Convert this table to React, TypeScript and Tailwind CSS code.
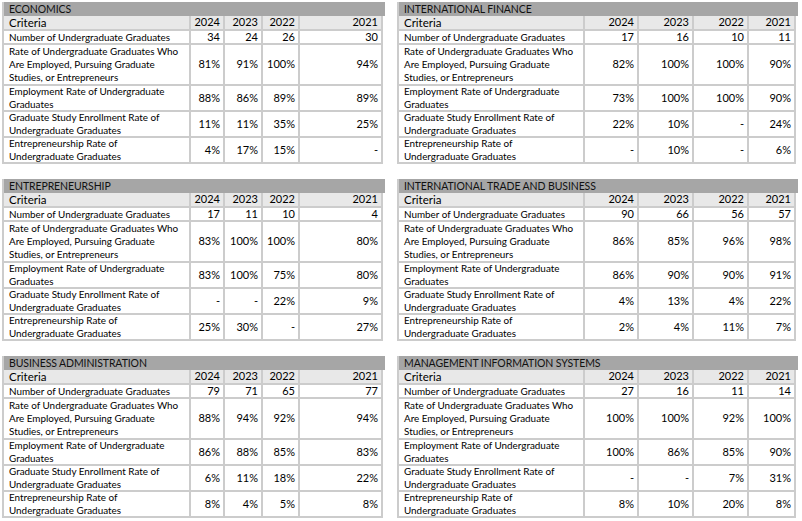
import React from "react";

const labels: { label: React.ReactNode; h: string }[] = [
  { label: "Number of Undergraduate Graduates", h: "h-[14px]" },
  {
    label: (
      <>
        Rate of Undergraduate Graduates Who
        <br />
        Are Employed, Pursuing Graduate
        <br />
        Studies, or Entrepreneurs
      </>
    ),
    h: "h-[41px]",
  },
  {
    label: (
      <>
        Employment Rate of Undergraduate
        <br />
        Graduates
      </>
    ),
    h: "h-[26px]",
  },
  {
    label: (
      <>
        Graduate Study Enrollment Rate of
        <br />
        Undergraduate Graduates
      </>
    ),
    h: "h-[26px]",
  },
  {
    label: (
      <>
        Entrepreneurship Rate of
        <br />
        Undergraduate Graduates
      </>
    ),
    h: "h-[26px]",
  },
];

const left = [
  {
    title: "ECONOMICS",
    data: [
      ["34", "24", "26", "30"],
      ["81%", "91%", "100%", "94%"],
      ["88%", "86%", "89%", "89%"],
      ["11%", "11%", "35%", "25%"],
      ["4%", "17%", "15%", "-"],
    ],
  },
  {
    title: "ENTREPRENEURSHIP",
    data: [
      ["17", "11", "10", "4"],
      ["83%", "100%", "100%", "80%"],
      ["83%", "100%", "75%", "80%"],
      ["-", "-", "22%", "9%"],
      ["25%", "30%", "-", "27%"],
    ],
  },
  {
    title: "BUSINESS ADMINISTRATION",
    data: [
      ["79", "71", "65", "77"],
      ["88%", "94%", "92%", "94%"],
      ["86%", "88%", "85%", "83%"],
      ["6%", "11%", "18%", "22%"],
      ["8%", "4%", "5%", "8%"],
    ],
  },
];

const right = [
  {
    title: "INTERNATIONAL FINANCE",
    data: [
      ["17", "16", "10", "11"],
      ["82%", "100%", "100%", "90%"],
      ["73%", "100%", "100%", "90%"],
      ["22%", "10%", "-", "24%"],
      ["-", "10%", "-", "6%"],
    ],
  },
  {
    title: "INTERNATIONAL TRADE AND BUSINESS",
    data: [
      ["90", "66", "56", "57"],
      ["86%", "85%", "96%", "98%"],
      ["86%", "90%", "90%", "91%"],
      ["4%", "13%", "4%", "22%"],
      ["2%", "4%", "11%", "7%"],
    ],
  },
  {
    title: "MANAGEMENT INFORMATION SYSTEMS",
    data: [
      ["27", "16", "11", "14"],
      ["100%", "100%", "92%", "100%"],
      ["100%", "86%", "85%", "90%"],
      ["-", "-", "7%", "31%"],
      ["8%", "10%", "20%", "8%"],
    ],
  },
];

function Block({
  title,
  data,
  width,
  grid,
}: {
  title: string;
  data: string[][];
  width: string;
  grid: string;
}) {
  const cell = "border-r-2 border-b-2 border-[#cccccc] flex items-center";
  return (
    <div className={`${width} border-l-2 border-[#cccccc]`}>
      <div className="h-[14px] bg-[#a6a6a6] pl-[5px] flex items-center text-[10.5px] leading-none text-[#111111] tracking-[-0.1px]">
        {title}
      </div>
      <div className={`grid ${grid}`}>
        <div className={`${cell} h-[15px] bg-[#e8e8e8] pl-[5px] text-[11.5px]`}>Criteria</div>
        {["2024", "2023", "2022", "2021"].map((y) => (
          <div key={y} className={`${cell} h-[15px] bg-[#e8e8e8] justify-end pr-[3px] text-[11px]`}>
            {y}
          </div>
        ))}
        {labels.map((l, i) => (
          <React.Fragment key={i}>
            <div className={`${cell} ${l.h} pl-[5px] text-[9.9px] leading-[13px] whitespace-nowrap`}>
              <span>{l.label}</span>
            </div>
            {data[i].map((v, j) => (
              <div key={j} className={`${cell} ${l.h} justify-end pr-[3px] text-[11px]`}>
                {v}
              </div>
            ))}
          </React.Fragment>
        ))}
      </div>
    </div>
  );
}

export default function App() {
  return (
    <div
      className="w-[802px] h-[521px] bg-white flex gap-x-[12px] pl-[2px] pt-[2px] text-black overflow-hidden"
      style={{ fontFamily: "Lato, 'Open Sans', sans-serif" }}
    >
      <div className="flex flex-col gap-y-[15px]">
        {left.map((s) => (
          <Block
            key={s.title}
            title={s.title}
            data={s.data}
            width="w-[383px]"
            grid="grid-cols-[187px_34px_38px_37px_83px]"
          />
        ))}
      </div>
      <div className="flex flex-col gap-y-[15px]">
        {right.map((s) => (
          <Block
            key={s.title}
            title={s.title}
            data={s.data}
            width="w-[401px]"
            grid="grid-cols-[186px_54px_55px_55px_47px]"
          />
        ))}
      </div>
    </div>
  );
}
